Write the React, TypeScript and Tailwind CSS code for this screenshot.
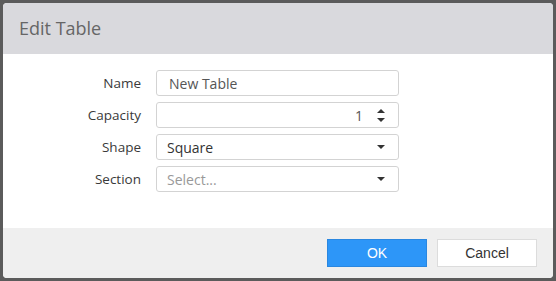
import React from 'react';

const fieldFont = { fontFamily: '"Open Sans", "Noto Sans", sans-serif' };

function Caret() {
  return (
    <svg width="8" height="4" viewBox="0 0 8 4" className="fill-[#333]">
      <path d="M0 0h8L4 4z" />
    </svg>
  );
}

function Spinner() {
  return (
    <div className="flex flex-col gap-[5px]">
      <svg width="8" height="4" viewBox="0 0 8 4" className="fill-[#333]">
        <path d="M0 4h8L4 0z" />
      </svg>
      <svg width="8" height="4" viewBox="0 0 8 4" className="fill-[#333]">
        <path d="M0 0h8L4 4z" />
      </svg>
    </div>
  );
}

function Row({ label, children }: { label: string; children: React.ReactNode }) {
  return (
    <div className="flex items-center h-[26px]">
      <div className="w-[138px] text-right text-[13.5px] text-[#3a3a3a]">{label}</div>
      <div className="ml-[15px] w-[243px] h-[26px] rounded-[3px] border border-[#d3d3d3] bg-white flex items-center text-[14px]">
        {children}
      </div>
    </div>
  );
}

export default function App() {
  return (
    <div className="w-[556px] h-[281px] bg-[#5b5b5b] p-[3px]" style={fieldFont}>
      <div className="w-full h-full rounded-[4px] overflow-hidden flex flex-col bg-white">
        <div className="h-[51px] bg-[#d9d9dd] flex items-center px-[16px] text-[18px] text-[#666]">
          Edit Table
        </div>
        <div className="flex-1 bg-white pt-[16px] flex flex-col gap-[6px]">
          <Row label="Name">
            <span className="pl-[12px] text-[#555]">New Table</span>
          </Row>
          <Row label="Capacity">
            <span className="flex-1 text-right text-[#555]">1</span>
            <div className="w-[35px] flex justify-center">
              <Spinner />
            </div>
          </Row>
          <Row label="Shape">
            <span className="flex-1 pl-[10px] text-[#333]">Square</span>
            <div className="w-[35px] flex justify-center">
              <Caret />
            </div>
          </Row>
          <Row label="Section">
            <span className="flex-1 pl-[10px] text-[#999]">Select...</span>
            <div className="w-[35px] flex justify-center">
              <Caret />
            </div>
          </Row>
        </div>
        <div
          className="h-[50px] bg-[#efefef] flex items-center justify-end pr-[16px] gap-[10px]"
          style={{ fontFamily: '"Liberation Sans", Arial, sans-serif' }}
        >
          <button className="w-[100px] h-[28px] bg-[#2d96f8] border border-[#2a87e0] text-white text-[14px]">
            OK
          </button>
          <button className="w-[100px] h-[28px] bg-white border border-[#dcdcdc] text-[#333] text-[14px]">
            Cancel
          </button>
        </div>
      </div>
    </div>
  );
}
